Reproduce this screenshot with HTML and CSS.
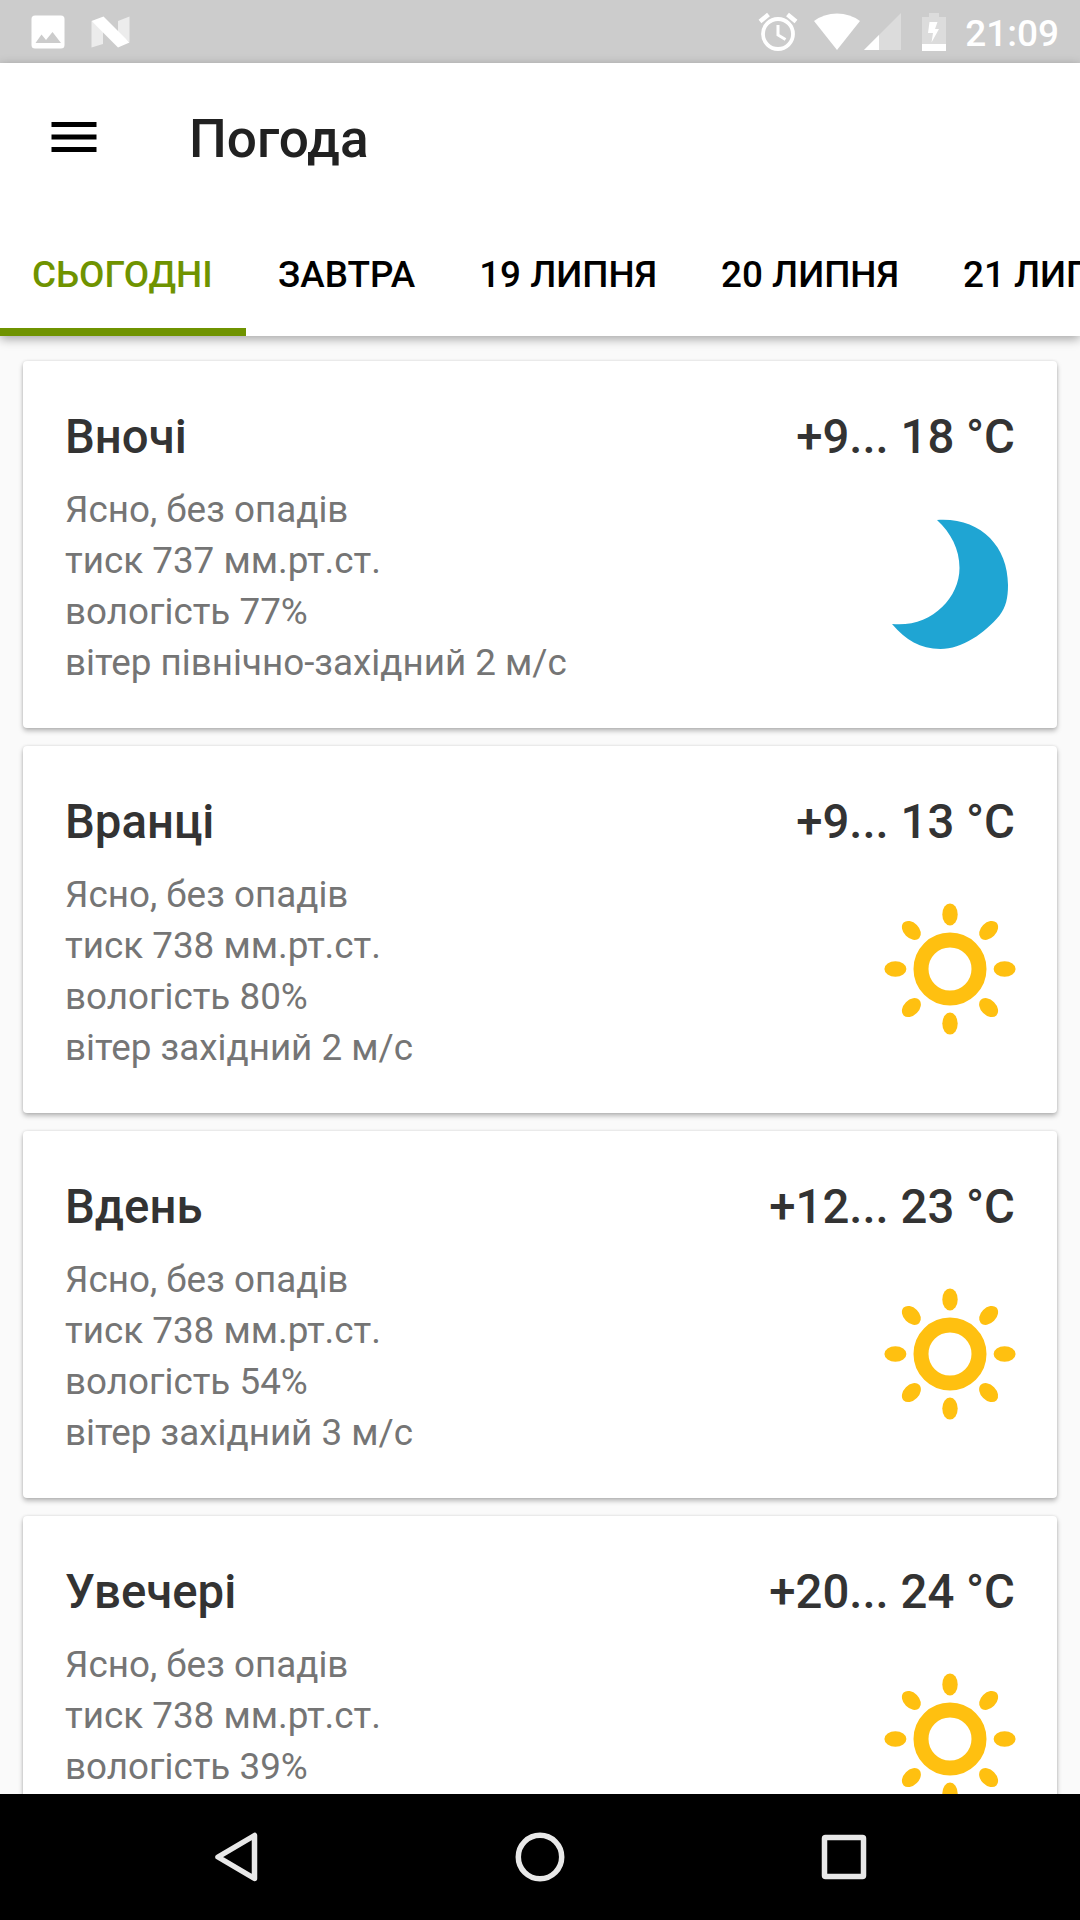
FILE: index.html
```html
<!DOCTYPE html>
<html lang="uk">
	<head>
		<meta charset="utf-8">
		<title>Погода</title>
		<link rel="stylesheet" href="styles.css">
	</head>
	<body>
		<svg class="defs" width="0" height="0">
			<symbol id="sun" viewBox="-66 -66 132 132">
				<circle r="29" fill="none" stroke="#ffc010" stroke-width="15"/>
				<g fill="#ffc010">
					<ellipse cy="-54.6" rx="7.7" ry="11"/>
					<ellipse cy="-54.6" rx="7.7" ry="11" transform="rotate(45)"/>
					<ellipse cy="-54.6" rx="7.7" ry="11" transform="rotate(90)"/>
					<ellipse cy="-54.6" rx="7.7" ry="11" transform="rotate(135)"/>
					<ellipse cy="-54.6" rx="7.7" ry="11" transform="rotate(180)"/>
					<ellipse cy="-54.6" rx="7.7" ry="11" transform="rotate(225)"/>
					<ellipse cy="-54.6" rx="7.7" ry="11" transform="rotate(270)"/>
					<ellipse cy="-54.6" rx="7.7" ry="11" transform="rotate(315)"/>
				</g>
			</symbol>
		</svg>
		<div class="status">
			<svg class="picture" width="34" height="34" viewBox="0 0 34 34">
				<path fill="#fff" fill-rule="evenodd" d="M4 0.5H30Q33.5 0.5 33.5 4V30Q33.5 33.5 30 33.5H4Q0.5 33.5 0.5 30V4Q0.5 0.5 4 0.5ZM4.5 28H30L21.5 17L15 25L10.500 19.500Z"/>
			</svg>
			<svg class="nougat" width="39" height="32" viewBox="0 0 39 32">
				<path fill="#ececec" d="M0.500 5L12 14V28L0.500 31.500ZM27 5L38.500 0.500V26L27 18Z"/>
				<path fill="#fff" d="M0.500 5L12.500 0.500L38.500 26.500L27 31.500Z"/>
			</svg>
			<svg class="alarm" width="40" height="40" viewBox="0 0 40 40">
				<g fill="none" stroke="#fff">
					<circle cx="20" cy="22" r="15" stroke-width="3.800"/>
					<path stroke-width="3" d="M20 13V23L27.500 27.500"/>
					<path stroke-width="4.500" d="M2 9.500L10.500 2.500M38 9.500L29.500 2.500"/>
				</g>
			</svg>
			<svg class="wifi" width="46" height="38" viewBox="0 0 46 38">
				<path fill="#fff" d="M0 8Q10 0.500 23 0.500T46 8L23 37Z"/>
			</svg>
			<svg class="signal" width="37" height="37" viewBox="0 0 37 37">
				<path fill="#dcdcdc" d="M37 0V37H0Z"/>
				<path fill="#fff" d="M15 22V37H0Z"/>
			</svg>
			<svg class="battery" width="24" height="38" viewBox="0 0 24 38">
				<path fill="#dcdcdc" d="M7 0H17V4H24V38H0V4H7Z"/>
				<path fill="#fff" d="M0 31H24V38H0ZM7.500 9H15.500L13 16H17L9.500 29.500L11 20H6Z"/>
			</svg>
			<span class="clock">21:09</span>
		</div>
		<div class="header">
			<div class="toolbar">
				<svg class="menu" width="46" height="30" viewBox="0 0 46 30">
					<path d="M0.500 0H45.500V5H0.500ZM0.500 12.500H45.500V17.500H0.500ZM0.500 25H45.500V30H0.500Z"/>
				</svg>
				<h1>Погода</h1>
			</div>
			<div class="tabs">
				<span class="tab active">СЬОГОДНІ</span>
				<span class="tab">ЗАВТРА</span>
				<span class="tab">19 ЛИПНЯ</span>
				<span class="tab">20 ЛИПНЯ</span>
				<span class="tab">21 ЛИПНЯ</span>
			</div>
		</div>
		<div class="content">
			<div class="card">
				<div class="card_head"><h2>Вночі</h2><h2>+9... 18 °C</h2></div>
				<div class="card_body">
					<p>Ясно, без опадів<br>тиск 737 мм.рт.ст.<br>вологість 77%<br>вітер північно-західний 2 м/с</p>
					<svg class="icon" viewBox="0 0 132 132">
						<path fill="#1fa5d3" d="M53 2C95 -1 124 27 124 67C124 80 122 89 115.500 97.500C101 115 78 131 56.500 131C36 131 22 122 8 106C46 110 75.500 81 75.500 50C75.500 31 67 15 53 2Z"/>
					</svg>
				</div>
			</div>
			<div class="card">
				<div class="card_head"><h2>Вранці</h2><h2>+9... 13 °C</h2></div>
				<div class="card_body">
					<p>Ясно, без опадів<br>тиск 738 мм.рт.ст.<br>вологість 80%<br>вітер західний 2 м/с</p>
					<svg class="icon"><use href="#sun"/></svg>
				</div>
			</div>
			<div class="card">
				<div class="card_head"><h2>Вдень</h2><h2>+12... 23 °C</h2></div>
				<div class="card_body">
					<p>Ясно, без опадів<br>тиск 738 мм.рт.ст.<br>вологість 54%<br>вітер західний 3 м/с</p>
					<svg class="icon"><use href="#sun"/></svg>
				</div>
			</div>
			<div class="card">
				<div class="card_head"><h2>Увечері</h2><h2>+20... 24 °C</h2></div>
				<div class="card_body">
					<p>Ясно, без опадів<br>тиск 738 мм.рт.ст.<br>вологість 39%</p>
					<svg class="icon"><use href="#sun"/></svg>
				</div>
			</div>
		</div>
		<div class="navbar">
			<svg width="50" height="50" viewBox="0 0 50 50">
				<path d="M43.500 3.500V46.500L7 25Z"/>
			</svg>
			<svg width="50" height="50" viewBox="0 0 50 50">
				<circle cx="25" cy="25" r="21.700"/>
			</svg>
			<svg width="50" height="50" viewBox="0 0 50 50">
				<rect x="5.500" y="5.500" width="39" height="39" rx="1"/>
			</svg>
		</div>
	</body>
</html>
```
FILE: styles.css
```css
* {
	box-sizing: border-box;
}
body {
	display: flex;
	flex-direction: column;
	margin: 0;
	width: 1080px;
	height: 1920px;
	overflow: hidden;
	background: #fafafa;
	font-family: Roboto, sans-serif;
}
svg {
	display: block;
	flex: none;
}
.defs {
	position: absolute;
}
h1, h2, p {
	margin: 0;
}

/* status bar */
.status {
	display: flex;
	align-items: center;
	flex: none;
	height: 63px;
	padding: 0 21px 0 30.500px;
	background: #ccc;
}
.nougat {
	margin-left: 26px;
}
.alarm {
	margin-left: auto;
}
.wifi {
	margin-left: 16px;
}
.signal {
	margin-left: 4px;
}
.battery {
	margin-left: 21px;
}
.clock {
	margin-left: 19px;
	padding-top: 5px;
	color: #fff;
	font-size: 37px;
	font-weight: 500;
	line-height: 58px;
}

/* header */
.header {
	flex: none;
	height: 273px;
	background: #fff;
	box-shadow: 0 3px 10px rgba(0, 0, 0, 0.35);
	z-index: 1;
}
.toolbar {
	display: flex;
	align-items: center;
	height: 147px;
	padding-left: 51px;
}
h1 {
	margin-left: 92px;
	padding-top: 5px;
	color: #212121;
	font-size: 53.2px;
	font-weight: 500;
	line-height: 64px;
}
.tabs {
	display: flex;
	height: 126px;
	overflow: hidden;
}
.tab {
	flex: none;
	padding: 0 32px;
	color: #000;
	font-size: 36.85px;
	font-weight: 500;
	line-height: 129px;
	white-space: nowrap;
}
.active {
	width: 246px;
	border-bottom: 8px solid #6f9300;
	color: #6f9300;
}

/* forecast */
.content {
	display: flex;
	flex-direction: column;
	flex: 1;
	gap: 18px;
	min-height: 0;
	padding: 25px 23px 0;
	overflow: hidden;
}
.card {
	flex: none;
	height: 367px;
	padding: 48px 42px 0;
	border-radius: 4px;
	background: #fff;
	box-shadow: 0 3px 5px rgba(0, 0, 0, 0.26), 0 0 3px rgba(0, 0, 0, 0.12);
}
.card_head {
	display: flex;
	justify-content: space-between;
}
h2 {
	color: #333;
	font-size: 47.3px;
	font-weight: 500;
	line-height: 56px;
}
.card_body {
	display: flex;
	justify-content: space-between;
}
p {
	padding-top: 19px;
	color: #757575;
	font-size: 36.8px;
	line-height: 51px;
}
.icon {
	width: 132px;
	height: 132px;
	margin: 53px -0.5px 0 0;
}

/* navigation bar */
.navbar {
	display: flex;
	justify-content: center;
	align-items: center;
	flex: none;
	gap: 254px;
	height: 126px;
	background: #000;
}
.navbar svg {
	fill: none;
	stroke: #e8e8e8;
	stroke-width: 5.5;
	stroke-linejoin: round;
}
```
